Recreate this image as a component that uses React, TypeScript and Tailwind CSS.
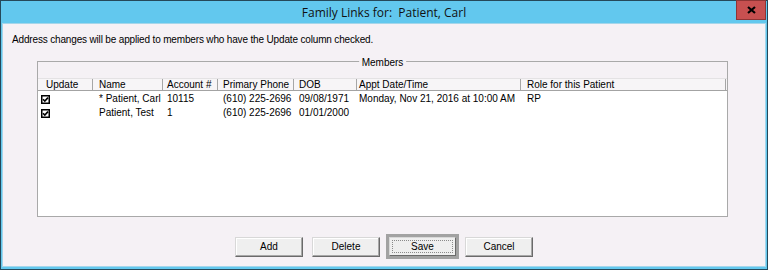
const columns = [
  { label: "Update", w: "w-[55px]", pl: "pl-[8px]" },
  { label: "Name", w: "w-[70px]", pl: "pl-[6px]" },
  { label: "Account #", w: "w-[55px]", pl: "pl-[4px]" },
  { label: "Primary Phone", w: "w-[76px]", pl: "pl-[5px]" },
  { label: "DOB", w: "w-[63px]", pl: "pl-[5px]" },
  { label: "Appt Date/Time", w: "w-[164px]", pl: "pl-[2px]" },
  { label: "Role for this Patient", w: "w-[205px]", pl: "pl-[6px]" },
];

const members = [
  {
    name: "* Patient, Carl",
    account: "10115",
    phone: "(610) 225-2696",
    dob: "09/08/1971",
    appt: "Monday, Nov 21, 2016 at 10:00 AM",
    role: "RP",
  },
  { name: "Patient, Test", account: "1", phone: "(610) 225-2696", dob: "01/01/2000", appt: "", role: "" },
];

function CheckBox() {
  return (
    <svg width="9" height="9" viewBox="0 0 9 9" className="ml-[3px]">
      <rect x="0.75" y="0.75" width="7.5" height="7.5" fill="#fff" stroke="#000" strokeWidth="1.5" />
      <path d="M2 4.2 L3.8 6 L7 2.6" fill="none" stroke="#000" strokeWidth="1.6" />
    </svg>
  );
}

function WinButton({ label }: { label: string }) {
  return (
    <button className="w-[68px] h-[20px] bg-[#efefef] border border-t-[#d8d8d8] border-l-[#d8d8d8] border-r-[#6a6a6a] border-b-[#6a6a6a] shadow-[inset_-1px_-1px_0_#a8a8a8,inset_1px_1px_0_#ffffff] text-[10px] leading-[12px] text-black">
      {label}
    </button>
  );
}

export default function App() {
  return (
    <div className="w-[768px] h-[270px] bg-[#62c8ee] border border-[#25495a] flex flex-col font-['Liberation_Sans',Arial,sans-serif] text-black">
      {/* Title bar */}
      <div className="relative h-[22px] flex items-center justify-center pt-[2px]">
        <span className="whitespace-pre text-[12px] leading-[16px] text-[#111] font-['Open_Sans','Noto_Sans',sans-serif]">
          Family Links for:  Patient, Carl
        </span>
        <div className="absolute right-[1px] top-[-1px] w-[30px] h-[20px] bg-[#c75050] border border-[#8e3535] flex items-center justify-center">
          <svg width="9" height="8" viewBox="0 0 9 8">
            <path d="M1 1 L8 7 M8 1 L1 7" stroke="#000" strokeWidth="2.2" />
          </svg>
        </div>
      </div>

      {/* Client area */}
      <div className="flex-1 mx-[1px] mb-[2px] bg-[#f5f1f5] border border-[#a5d6ea] flex flex-col">
        <p className="mt-[10px] ml-[9px] h-[12px] text-[10px] leading-[12px] tracking-[-0.16px]">
          Address changes will be applied to members who have the Update column checked.
        </p>

        {/* Members group */}
        <div className="relative mt-[15px] ml-[34px] w-[691px] h-[156px] border border-[#a9a9a9] pt-[16px] flex flex-col">
          <span className="absolute left-1/2 -translate-x-1/2 top-[-5px] px-[3px] bg-[#f5f1f5] text-[10px] leading-[12px]">
            Members
          </span>
          <div className="flex h-[13px] border-t border-t-[#e4e2e4] border-b border-b-[#a3a3a3] bg-[#f7f5f7]">
            {columns.map((c) => (
              <div
                key={c.label}
                className={`${c.w} ${c.pl} shrink-0 border-r border-r-[#a6a6a6] text-[10px] leading-[11px] whitespace-nowrap`}
              >
                {c.label}
              </div>
            ))}
          </div>
          <div className="flex-1 bg-white pt-[1px] flex flex-col">
            {members.map((m) => (
              <div key={m.name} className="flex h-[14px] items-center text-[10px] leading-[14px] whitespace-nowrap">
                <div className="w-[55px] shrink-0 flex items-center">
                  <CheckBox />
                </div>
                <div className="w-[70px] shrink-0 pl-[6px]">{m.name}</div>
                <div className="w-[55px] shrink-0 pl-[4px]">{m.account}</div>
                <div className="w-[76px] shrink-0 pl-[5px]">{m.phone}</div>
                <div className="w-[63px] shrink-0 pl-[5px]">{m.dob}</div>
                <div className="w-[164px] shrink-0 pl-[2px]">{m.appt}</div>
                <div className="w-[205px] shrink-0 pl-[6px]">{m.role}</div>
              </div>
            ))}
          </div>
        </div>

        {/* Buttons */}
        <div className="mt-[17px] h-[25px] flex items-center justify-center">
          <WinButton label="Add" />
          <div className="w-[9px]" />
          <WinButton label="Delete" />
          <div className="w-[6px]" />
          <div className="w-[73px] h-[25px] border-[3px] border-[#a2a2a2] flex">
            <button className="relative flex-1 bg-[#efefef] border border-t-[#d8d8d8] border-l-[#d8d8d8] border-r-[#6a6a6a] border-b-[#6a6a6a] text-[10px] leading-[12px]">
              <span className="absolute inset-[2px] border border-dotted border-[#8a8a8a]" />
              Save
            </button>
          </div>
          <div className="w-[6px]" />
          <WinButton label="Cancel" />
        </div>
      </div>
    </div>
  );
}
